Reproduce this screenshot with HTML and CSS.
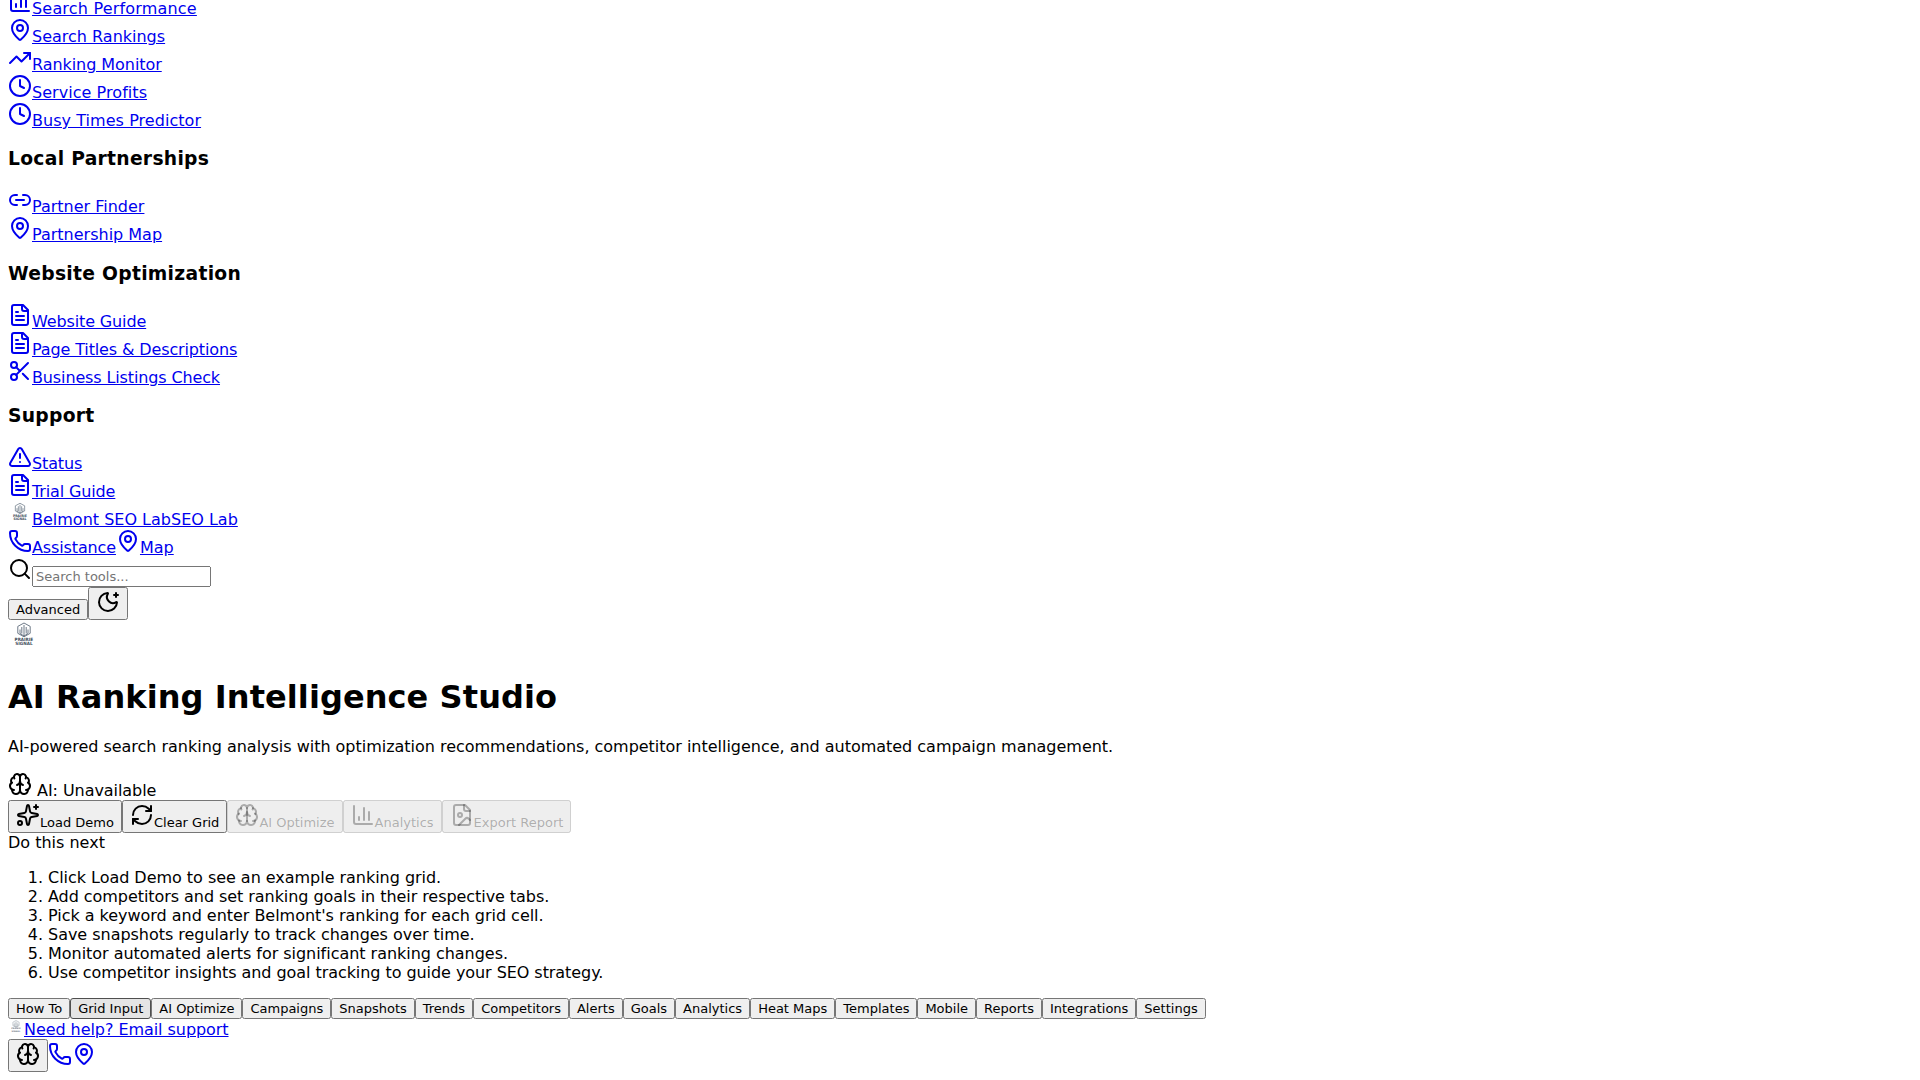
FILE: index.html
```html
<!DOCTYPE html>
<html lang="en">
<head>
<meta charset="utf-8">
<title>AI Ranking Intelligence Studio</title>
<link rel="stylesheet" href="styles.css">
</head>
<body>
<svg class="sprite" aria-hidden="true">
  <symbol id="chart" viewBox="0 0 24 24"><path d="M3 3v16a2 2 0 0 0 2 2h16"/><path d="M18 17V9"/><path d="M13 17V5"/><path d="M8 17v-3"/></symbol>
  <symbol id="pin" viewBox="0 0 24 24"><path d="M20 10c0 4.993-5.539 10.193-7.399 11.799a1 1 0 0 1-1.202 0C9.539 20.193 4 14.993 4 10a8 8 0 0 1 16 0"/><circle cx="12" cy="10" r="3"/></symbol>
  <symbol id="trend" viewBox="0 0 24 24"><path d="M16 7h6v6"/><path d="m22 7-8.5 8.5-5-5L2 17"/></symbol>
  <symbol id="clock" viewBox="0 0 24 24"><path d="M12 6v6l4 2"/><circle cx="12" cy="12" r="10"/></symbol>
  <symbol id="link" viewBox="0 0 24 24"><path d="M9 17H7A5 5 0 0 1 7 7h2"/><path d="M15 7h2a5 5 0 1 1 0 10h-2"/><path d="M8 12h8"/></symbol>
  <symbol id="file" viewBox="0 0 24 24"><path d="M15 2H6a2 2 0 0 0-2 2v16a2 2 0 0 0 2 2h12a2 2 0 0 0 2-2V7Z"/><path d="M14 2v4a2 2 0 0 0 2 2h4"/><path d="M10 9H8"/><path d="M16 13H8"/><path d="M16 17H8"/></symbol>
  <symbol id="scissors" viewBox="0 0 24 24"><circle cx="6" cy="6" r="3"/><path d="M8.12 8.12 12 12"/><path d="M20 4 8.12 15.88"/><circle cx="6" cy="18" r="3"/><path d="M14.8 14.8 20 20"/></symbol>
  <symbol id="alert" viewBox="0 0 24 24"><path d="m21.73 18-8-14a2 2 0 0 0-3.48 0l-8 14A2 2 0 0 0 4 21h16a2 2 0 0 0 1.73-3"/><path d="M12 9v4"/><path d="M12 17h.01"/></symbol>
  <symbol id="phone" viewBox="0 0 24 24"><path d="M13.832 16.568a1 1 0 0 0 1.213-.303l.355-.465A2 2 0 0 1 17 15h3a2 2 0 0 1 2 2v3a2 2 0 0 1-2 2A18 18 0 0 1 2 4a2 2 0 0 1 2-2h3a2 2 0 0 1 2 2v3a2 2 0 0 1-.8 1.6l-.468.351a1 1 0 0 0-.292 1.233 14 14 0 0 0 6.392 6.384"/></symbol>
  <symbol id="search" viewBox="0 0 24 24"><path d="m21 21-4.34-4.34"/><circle cx="11" cy="11" r="8"/></symbol>
  <symbol id="moon" viewBox="0 0 24 24"><path d="M18 5h4"/><path d="M20 3v4"/><path d="M20.985 12.486a9 9 0 1 1-9.473-9.472c.405-.022.617.46.402.803a6 6 0 0 0 8.268 8.268c.344-.215.825-.004.803.401"/></symbol>
  <symbol id="brain" viewBox="0 0 24 24"><path d="M12 18V5"/><path d="M15 13a4.17 4.17 0 0 1-3-4 4.17 4.17 0 0 1-3 4"/><path d="M17.598 6.5A3 3 0 1 0 12 5a3 3 0 1 0-5.598 1.5"/><path d="M17.997 5.125a4 4 0 0 1 2.526 5.77"/><path d="M18 18a4 4 0 0 0 2-7.464"/><path d="M19.967 17.483A4 4 0 1 1 12 18a4 4 0 1 1-7.967-.517"/><path d="M6 18a4 4 0 0 1-2-7.464"/><path d="M6.003 5.125a4 4 0 0 0-2.526 5.77"/></symbol>
  <symbol id="sparkles" viewBox="0 0 24 24"><path d="M11.017 2.814a1 1 0 0 1 1.966 0l1.051 5.558a2 2 0 0 0 1.594 1.594l5.558 1.051a1 1 0 0 1 0 1.966l-5.558 1.051a2 2 0 0 0-1.594 1.594l-1.051 5.558a1 1 0 0 1-1.966 0l-1.051-5.558a2 2 0 0 0-1.594-1.594l-5.558-1.051a1 1 0 0 1 0-1.966l5.558-1.051a2 2 0 0 0 1.594-1.594z"/><path d="M20 2v4"/><path d="M22 4h-4"/><circle cx="4" cy="20" r="2"/></symbol>
  <symbol id="refresh" viewBox="0 0 24 24"><path d="M3 12a9 9 0 0 1 9-9 9.75 9.75 0 0 1 6.74 2.74L21 8"/><path d="M21 3v5h-5"/><path d="M21 12a9 9 0 0 1-9 9 9.75 9.75 0 0 1-6.74-2.74L3 16"/><path d="M8 16H3v5"/></symbol>
  <symbol id="image" viewBox="0 0 24 24"><path d="M15 2H6a2 2 0 0 0-2 2v16a2 2 0 0 0 2 2h12a2 2 0 0 0 2-2V7Z"/><path d="M14 2v4a2 2 0 0 0 2 2h4"/><circle cx="10" cy="12" r="2"/><path d="m20 17-1.296-1.296a2.41 2.41 0 0 0-3.408 0L9 22"/></symbol>
  <symbol id="logo" viewBox="0 0 32 32">
    <g fill="none" stroke="#5d6b7a" stroke-width=".9"><path d="M16 3l6.200 3.400v6.900l-6.200 3.500-6.200-3.500V6.400z"/><path d="M16 5v11M13.800 7v6.500M18.200 7v6.500M12 9.500v4l4 2.500 4-2.500v-4"/></g>
    <text class="logo-text" x="6.600" y="20.800" textLength="18.600" lengthAdjust="spacingAndGlyphs">PRAIRIE</text>
    <text class="logo-text" x="7.200" y="25" textLength="17.400" lengthAdjust="spacingAndGlyphs">SIGNAL</text>
  </symbol>
</svg>

<nav>
  <div class="wide"><a href="#"><svg class="icon"><use href="#chart"/></svg>Search Performance</a></div>
  <div><a href="#"><svg class="icon"><use href="#pin"/></svg>Search Rankings</a></div>
  <div class="snug"><a href="#"><svg class="icon"><use href="#trend"/></svg>Ranking Monitor</a></div>
  <div class="airy"><a href="#"><svg class="icon"><use href="#clock"/></svg>Service Profits</a></div>
  <div class="airy"><a href="#"><svg class="icon"><use href="#clock"/></svg>Busy Times Predictor</a></div>
  <h3>Local Partnerships</h3>
  <div><a href="#"><svg class="icon"><use href="#link"/></svg>Partner Finder</a></div>
  <div><a href="#"><svg class="icon"><use href="#pin"/></svg>Partnership Map</a></div>
  <h3>Website Optimization</h3>
  <div class="tight"><a href="#"><svg class="icon"><use href="#file"/></svg>Website Guide</a></div>
  <div class="tight"><a href="#"><svg class="icon"><use href="#file"/></svg>Page Titles &amp; Descriptions</a></div>
  <div class="tight"><a href="#"><svg class="icon"><use href="#scissors"/></svg>Business Listings Check</a></div>
  <h3>Support</h3>
  <div class="tight"><a href="#"><svg class="icon"><use href="#alert"/></svg>Status</a></div>
  <div class="tight"><a href="#"><svg class="icon"><use href="#file"/></svg>Trial Guide</a></div>
</nav>

<header>
  <div><a href="#"><svg class="logo logo-md"><use href="#logo"/></svg><span>Belmont SEO Lab</span><span>SEO Lab</span></a></div>
  <div><a class="tight" href="#"><svg class="icon"><use href="#phone"/></svg>Assistance</a><a href="#"><svg class="icon"><use href="#pin"/></svg>Map</a></div>
  <div><svg class="icon"><use href="#search"/></svg><input type="text" placeholder="Search tools..."></div>
  <div><button>Advanced</button><button aria-label="Theme"><svg class="icon"><use href="#moon"/></svg></button></div>
</header>

<main>
  <div><svg class="logo logo-lg"><use href="#logo"/></svg></div>
  <h1>AI Ranking Intelligence Studio</h1>
  <p>AI-powered search ranking analysis with optimization recommendations, competitor intelligence, and automated campaign management.</p>
  <div class="snug"><svg class="icon"><use href="#brain"/></svg> AI: Unavailable</div>
  <div><button><svg class="icon"><use href="#sparkles"/></svg>Load Demo</button><button><svg class="icon"><use href="#refresh"/></svg>Clear Grid</button><button disabled><svg class="icon"><use href="#brain"/></svg>AI Optimize</button><button disabled><svg class="icon"><use href="#chart"/></svg>Analytics</button><button disabled><svg class="icon"><use href="#image"/></svg>Export Report</button></div>
  <div>Do this next</div>
  <ol>
    <li>Click Load Demo to see an example ranking grid.</li>
    <li class="snug">Add competitors and set ranking goals in their respective tabs.</li>
    <li>Pick a keyword and enter Belmont's ranking for each grid cell.</li>
    <li>Save snapshots regularly to track changes over time.</li>
    <li>Monitor automated alerts for significant ranking changes.</li>
    <li class="snug">Use competitor insights and goal tracking to guide your SEO strategy.</li>
  </ol>
  <div><button>How To</button><button class="highlighted">Grid Input</button><button>AI Optimize</button><button>Campaigns</button><button>Snapshots</button><button>Trends</button><button>Competitors</button><button>Alerts</button><button>Goals</button><button>Analytics</button><button>Heat Maps</button><button>Templates</button><button>Mobile</button><button>Reports</button><button>Integrations</button><button>Settings</button></div>
</main>

<footer>
  <div class="snug"><a href="#"><svg class="logo logo-sm"><use href="#logo"/></svg>Need help? Email support</a></div>
  <div><button aria-label="Assistant"><svg class="icon"><use href="#brain"/></svg></button><a href="#" aria-label="Call"><svg class="icon"><use href="#phone"/></svg></a><a href="#" aria-label="Map"><svg class="icon"><use href="#pin"/></svg></a></div>
</footer>
</body>
</html>
```
FILE: styles.css
```css
html {
  height: 100%;
  overflow: hidden;
}

body {
  margin: -10px 8px 8px;
  background: #fff;
  color: #000;
  font-family: "DejaVu Sans", sans-serif;
}

h1 {
  letter-spacing: 0.08px;
}

h3 {
  margin: 18.2px 0 19.24px;
  letter-spacing: 0.29px;
}

p {
  letter-spacing: -0.02px;
}

li {
  letter-spacing: -0.03px;
}

button,
input {
  font-family: inherit;
  font-size: 13px;
}

input {
  box-sizing: border-box;
  width: 179px;
  height: 21px;
}

a {
  color: #0000ee;
}

.wide {
  letter-spacing: 0.19px;
}

.airy {
  letter-spacing: 0.05px;
}

.snug {
  letter-spacing: -0.06px;
}

.tight {
  letter-spacing: -0.13px;
}

.sprite {
  display: none;
}

.icon {
  width: 24px;
  height: 24px;
  fill: none;
  stroke: currentColor;
  stroke-width: 2;
  stroke-linecap: round;
  stroke-linejoin: round;
}

.logo-sm {
  width: 16px;
  height: 16px;
  opacity: 0.75;
}

.logo-md {
  width: 24px;
  height: 24px;
}

.logo-lg {
  width: 32px;
  height: 32px;
}

.logo-text {
  fill: #3f4d5c;
  font: bold 4.4px "DejaVu Sans", sans-serif;
}

.highlighted {
  padding: 2px 7px;
  border: 1px solid #4f4f4f;
  border-radius: 3px;
  background: #e5e5e5;
}
```
